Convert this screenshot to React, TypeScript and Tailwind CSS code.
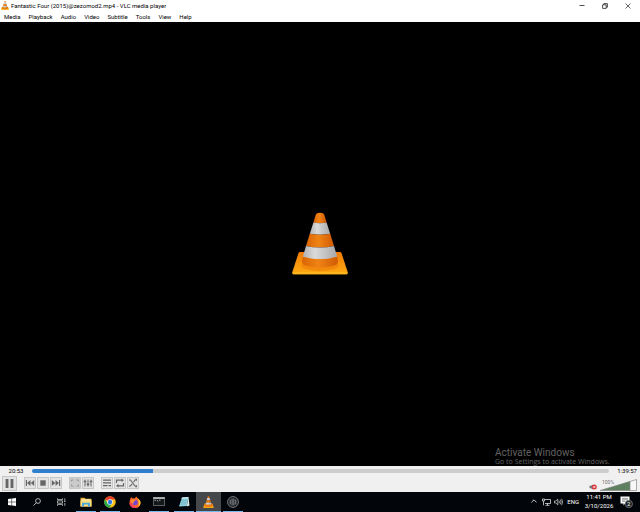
import type { ReactNode } from "react";

const MENUS = ["Media", "Playback", "Audio", "Video", "Subtitle", "Tools", "View", "Help"];

function Cone({ className }: { className: string }) {
  return (
    <svg viewBox="0 0 56 64" className={className} aria-hidden="true">
      <defs>
        <linearGradient id="base" x1="0" y1="0" x2="0" y2="1">
          <stop offset="0" stopColor="#f07c08" />
          <stop offset="1" stopColor="#ffab12" />
        </linearGradient>
        <linearGradient id="orange" x1="0" y1="0" x2="1" y2="0">
          <stop offset="0" stopColor="#d96404" />
          <stop offset="0.45" stopColor="#f08314" />
          <stop offset="1" stopColor="#d05a04" />
        </linearGradient>
        <linearGradient id="white" x1="0" y1="0" x2="1" y2="0">
          <stop offset="0" stopColor="#b0b0b0" />
          <stop offset="0.35" stopColor="#dadada" />
          <stop offset="1" stopColor="#a8a8a8" />
        </linearGradient>
      </defs>
      <path d="M8 40h40q1 0 1.500 1L55.500 59.500v2q0 .8-1 .8H1.500q-1 0-1-.8v-2L6.500 41Q7 40 8 40z" fill="url(#base)" />
      <path d="M.5 60h55v1.500q0 .8-1 .8H1.500q-1 0-1-.8z" fill="#ffb51c" />
      <path d="M10 52l36 0q2 3-3 5-15 4-30 0-5-2-3-5z" fill="#ee800c" opacity=".7" />
      <path d="M24 2q4-2.500 8 0l2.600 8.500q-6.600 1.500-13.200 0z" fill="url(#orange)" />
      <path d="M21.400 10.500q6.600 1.500 13.200 0l3.600 11.300q-10.200 2-20.400 0z" fill="url(#white)" />
      <path d="M17.800 21.800q10.200 2 20.400 0l3.800 12.300q-14 3-28 0z" fill="url(#orange)" />
      <path d="M14 34.100q14 3 28 0l3.200 10.600q-17.200 5-34.400 0z" fill="url(#white)" />
      <path d="M10.800 44.700q17.200 5 34.400 0L46 49q.3 3-3.500 4.500-14.500 4-29 0Q9.700 52 10 49z" fill="url(#orange)" />
    </svg>
  );
}

function ControlButton({ label, large, disabled, children }: { label: string; large?: boolean; disabled?: boolean; children: ReactNode }) {
  return (
    <button
      type="button"
      aria-label={label}
      className={`flex shrink-0 items-center justify-center border border-[#c6c6c6] text-[#666666] ${
        large ? "h-[15px] w-[15px]" : "h-3 w-3"
      } ${disabled ? "bg-[#cbcbcb]" : "bg-[#e3e3e3]"}`}
    >
      <svg viewBox="0 0 10 10" className={`shrink-0 ${large ? "h-[13px] w-[13px]" : "h-2.5 w-2.5"}`} fill="currentColor" stroke="none">
        {children}
      </svg>
    </button>
  );
}

function TaskItem({ label, open, active, children }: { label: string; open?: boolean; active?: boolean; children: ReactNode }) {
  return (
    <button
      type="button"
      aria-label={label}
      className={`flex h-full flex-col items-center ${active ? "bg-[#45474b]" : ""}`}
    >
      <span className="flex flex-1 items-center justify-center">{children}</span>
      <span className={`h-px ${active ? "w-full" : "w-5"} ${open ? "bg-[#76b9ed]" : ""}`} />
    </button>
  );
}

function TitleBar() {
  return (
    <header className="flex h-[11px] items-center bg-white pl-px pr-px">
      <Cone className="h-[9px] w-2" />
      <h1 className="ml-0.5 flex-1 truncate pt-px text-[6px] leading-[10px]">
        Fantastic Four (2015)@zezomod2.mp4 - VLC media player
      </h1>
      <div className="flex h-full text-[#222222]">
        <button type="button" aria-label="Minimize" className="flex w-[23px] items-center justify-center">
          <svg viewBox="0 0 6 6" className="h-1.5 w-1.5" stroke="currentColor" strokeWidth=".8"><path d="M.5 2.500h5" /></svg>
        </button>
        <button type="button" aria-label="Restore" className="flex w-[23px] items-center justify-center">
          <svg viewBox="0 0 6 6" className="h-1.5 w-1.5" fill="none" stroke="currentColor" strokeWidth=".8">
            <path d="M.6 1.800h3.600v3.600H.6zM1.800 1.800V.6h3.600v3.600H4.200" />
          </svg>
        </button>
        <button type="button" aria-label="Close" className="flex w-[23px] items-center justify-center">
          <svg viewBox="0 0 6 6" className="h-1.5 w-1.5" stroke="currentColor" strokeWidth=".7"><path d="M.5.5l5 5M5.500.5l-5 5" /></svg>
        </button>
      </div>
    </header>
  );
}

function PlayerControls() {
  return (
    <section className="bg-[#f0f0f0]">
      <div className="flex h-[10px] items-center text-[6px] leading-[10px]">
        <span className="w-8 text-center">20:53</span>
        <input
          type="range"
          aria-label="Position"
          min={0}
          max={5997}
          defaultValue={1253}
          className="h-1 min-w-0 flex-1 appearance-none rounded-sm bg-[linear-gradient(to_right,#2f7fcf_20.9%,#cdcdcd_20.9%)] [&::-webkit-slider-thumb]:h-1 [&::-webkit-slider-thumb]:w-px [&::-webkit-slider-thumb]:appearance-none"
        />
        <span className="w-[31px] pr-[3px] text-right">1:39:57</span>
      </div>
      <div className="flex h-4 items-start pl-0.5 pr-[3px]">
        <ControlButton label="Pause" large>
          <path d="M2 1.500h2.200v7H2zM5.800 1.500H8v7H5.800z" />
        </ControlButton>
        <div className="ml-[7px] mt-px flex gap-px">
          <ControlButton label="Previous">
            <path d="M.8 2h1.200v6H.8zM5.500 2v6L2 5zM9.200 2v6L5.700 5z" />
          </ControlButton>
          <ControlButton label="Stop">
            <path d="M2.300 2.300h5.400v5.400H2.300z" />
          </ControlButton>
          <ControlButton label="Next">
            <path d="M8 2h1.200v6H8zM4.500 2v6L8 5zM.8 2v6l3.500-3z" />
          </ControlButton>
        </div>
        <div className="ml-[7px] mt-px flex gap-px">
          <ControlButton label="Fullscreen" disabled>
            <path d="M1.500 3.500V2H3.500M6.500 2h2v1.500M8.500 6.500V8h-2M3.500 8h-2V6.500" fill="none" stroke="#999999" />
          </ControlButton>
          <ControlButton label="Extended settings">
            <path d="M1.500 1.500h1v7h-1zM4.500 1.500h1v7h-1zM7.500 1.500h1v7h-1zM.7 2.700h2.600v1.600H.7zM3.700 5.600h2.600v1.600H3.700zM6.700 2.700h2.600v1.600H6.700z" />
          </ControlButton>
        </div>
        <div className="ml-[7px] mt-px flex gap-px">
          <ControlButton label="Playlist">
            <path d="M1 1.500h8v1.200H1zM1 4.200h8v1.200H1zM1 7h4.500v1.200H1zM6.500 7H9v1.200H6.500z" />
          </ControlButton>
          <ControlButton label="Loop">
            <path d="M1.500 5V2.200H7M8.500 5v2.800H3" fill="none" stroke="currentColor" strokeWidth="1.200" />
            <path d="M6.500.4L9 2.200 6.500 4zM3.500 6L1 7.800l2.500 1.800z" />
          </ControlButton>
          <ControlButton label="Random">
            <path d="M1 2h1.500L7 8h1.500M1 8h1.500l1.700-2.200M5.500 4.200L7 2h1.500" fill="none" stroke="currentColor" strokeWidth="1.100" />
            <path d="M7 .8h2v2.500zM9 6.700v2.500H7z" />
          </ControlButton>
        </div>
        <button type="button" aria-label="Unmute" className="ml-auto mr-[3px] mt-2">
          <svg viewBox="0 0 8 6" className="h-1.5 w-2">
            <path d="M.5 1.800h1.500L4 .4v5.200L2 4.200H.5z" fill="#777777" />
            <circle cx="5.300" cy="3" r="2.500" fill="#d93a3f" />
            <path d="M4.300 2l2 2M6.300 2l-2 2" stroke="#ffffff" strokeWidth=".7" />
          </svg>
        </button>
        <div className="relative mt-[3px] h-3 w-[37px]">
          <svg viewBox="0 0 37 12" className="h-full w-full" aria-hidden="true">
            <path d="M0 11.500L30 2.300v9.200z" fill="#5f805f" />
            <path d="M30 2.300L36.500.5v11H30z" fill="#f7f7f7" />
            <path d="M0 11.500L36.500.5v11zM30 2.300v9.200" fill="none" stroke="#888888" strokeWidth=".7" />
          </svg>
          <span className="absolute left-0.5 top-0 text-[5px] leading-[6px] text-[#777777]">100%</span>
          <input type="range" aria-label="Volume" min={0} max={125} defaultValue={100} className="absolute inset-0 h-full w-full opacity-0" />
        </div>
      </div>
    </section>
  );
}

function Taskbar() {
  return (
    <footer className="flex h-5 items-stretch justify-between bg-[#020509] text-white">
      <nav aria-label="Taskbar" className="grid w-[245px] grid-cols-10">
        <TaskItem label="Start">
          <svg viewBox="0 0 8 8" className="h-2 w-2" fill="#ffffff">
            <path d="M0 1.100l3.600-.5v3.200H0zM4.100.5L8 0v3.800H4.100zM0 4.300h3.600v3.200L0 7zM4.100 4.300H8V8l-3.900-.5z" />
          </svg>
        </TaskItem>
        <TaskItem label="Search">
          <svg viewBox="0 0 8 8" className="h-2 w-2" fill="none" stroke="#dddddd" strokeWidth=".8">
            <circle cx="5" cy="3" r="2.400" /><path d="M3.300 4.800L.5 7.600" />
          </svg>
        </TaskItem>
        <TaskItem label="Task view">
          <svg viewBox="0 0 9 8" className="h-2 w-[9px]" fill="none" stroke="#cccccc" strokeWidth=".8">
            <path d="M.5.3v1.300h5V.3M.5 2.800h5v2.400h-5zM.5 7.800V6.400h5v1.400M7.800.3v2M7.800 5v2.800" /><path d="M7.200 3.300h1.200" strokeWidth="1.400" />
          </svg>
        </TaskItem>
        <TaskItem label="File Explorer" open>
          <svg viewBox="0 0 12 10" className="h-2.5 w-3">
            <path d="M.5.800h4l1 1h6v7.700H.5z" fill="#e9b43c" />
            <path d="M1.500 2.300h9V6h-9z" fill="#fff1bd" />
            <path d="M.5 3.300h11v6.200H.5z" fill="#fbdc7d" />
            <path d="M2 9.500V5.800h8v3.700H8V7.600H4v1.900z" fill="#47a9dd" />
          </svg>
        </TaskItem>
        <TaskItem label="Chrome" open>
          <svg viewBox="0 0 24 24" className="h-3 w-3">
            <circle cx="12" cy="12" r="11.500" fill="#fbc116" />
            <path d="M12 12L2 6.300a11.500 11.500 0 0 1 20 0V7H12z" fill="#e33b2e" />
            <path d="M2 6.300A11.500 11.500 0 0 0 11 23.500L16.500 14 12 12 7.500 15z" fill="#2da94f" />
            <circle cx="12" cy="12" r="5.600" fill="#ffffff" />
            <circle cx="12" cy="12" r="4.400" fill="#3478e5" />
          </svg>
        </TaskItem>
        <TaskItem label="Firefox">
          <svg viewBox="0 0 24 24" className="h-3 w-3">
            <path d="M3 5l1-3 3 3q2-.6 4 0l4-4q1 3 3 4 5 4 5 9a11 10.500 0 0 1-22 0q0-6 2-9z" fill="#ff6a2b" />
            <path d="M15 1q1 3 3 4 5 4 5 9a11 10.500 0 0 1-4 7.500Q21 9 15 1z" fill="#ffca32" />
            <path d="M1 13q0 6 4 9 6 4 12 0-9 1-12-6z" fill="#f0346b" />
            <circle cx="12" cy="13" r="5.500" fill="#7543d5" />
            <path d="M5 8q5-2 8 1-1 2-4 2-1 2 1 4-4 0-5-3z" fill="#ff9829" />
          </svg>
        </TaskItem>
        <TaskItem label="Command Prompt" open>
          <svg viewBox="0 0 12 9" className="h-[9px] w-3">
            <path d="M.3.300h11.400v8.400H.3z" fill="#15181a" stroke="#888888" strokeWidth=".8" />
            <path d="M.3.300h11.400v1.600H.3z" fill="#c4c4c4" />
            <path d="M1.500 3.200h1.500M4 3l1 1.500M6 3.200h1.500" stroke="#cccccc" strokeWidth=".8" />
          </svg>
        </TaskItem>
        <TaskItem label="Notepad" open>
          <svg viewBox="0 0 12 12" className="h-3 w-3">
            <path d="M4 1.500l6.500-.5-1.800 9-7.700.5z" fill="#8fd0df" />
            <path d="M4 1.500l6.500-.5-.3 1.200-6.700.5z" fill="#d9edf0" />
            <path d="M10.500 1l1 8.500-2.800 1z" fill="#dceaec" />
            <path d="M3.500 4.500l5.500-.3M3 6.300l5.500-.3M2.500 8.100L8 7.800" stroke="#559caf" strokeWidth=".5" />
          </svg>
        </TaskItem>
        <TaskItem label="VLC media player" open active>
          <Cone className="h-3 w-[11px]" />
        </TaskItem>
        <TaskItem label="Recorder" open>
          <svg viewBox="0 0 12 12" className="h-3 w-3" fill="none" stroke="#a9adb1">
            <circle cx="6" cy="6" r="5.400" fill="#14181c" strokeWidth=".7" />
            <path d="M3.200 3.500v5M5.100 2.500v7M6.900 2.500v7M8.800 3.500v5" strokeWidth=".8" />
          </svg>
        </TaskItem>
      </nav>
      <div className="flex items-center pb-0.5 pr-[7px] text-[6px]">
        <button type="button" aria-label="Show hidden icons" className="mr-[5px]">
          <svg viewBox="0 0 6 4" className="h-1 w-1.5" fill="none" stroke="#ffffff" strokeWidth=".8"><path d="M.4 3.400L3 .8l2.600 2.600" /></svg>
        </button>
        <button type="button" aria-label="Network" className="mr-[3px] mt-px">
          <svg viewBox="0 0 9 8" className="h-2 w-[9px]" fill="none" stroke="#dddddd" strokeWidth=".8">
            <path d="M3 1.500h5.500v4H3M5.500 5.500v1.800M3.500 7.300h4M.5 1h2v2h-2zM1.500 3v4.300" />
          </svg>
        </button>
        <button type="button" aria-label="Speakers" className="mr-1 mt-px">
          <svg viewBox="0 0 9 8" className="h-2 w-[9px]" fill="none" stroke="#dddddd" strokeWidth=".7">
            <path d="M.5 3h1.300l2-1.900v5.800L1.800 5H.5zM5 2.700q1 1.300 0 2.600M6.300 1.700q1.700 2.300 0 4.600M7.600.8q2 3.200 0 6.400" />
          </svg>
        </button>
        <button type="button" className="mr-1.5">ENG</button>
        <time className="mr-[7px] flex w-7 flex-col items-center whitespace-nowrap leading-[9px]">
          <span>11:41 PM</span>
          <span>3/10/2026</span>
        </time>
        <button type="button" aria-label="2 notifications" className="mt-0.5">
          <svg viewBox="0 0 13 12" className="h-3 w-[13px]">
            <path d="M.5.500h9v7H5L3.500 9.500v-2h-3z" fill="#ffffff" />
            <path d="M2 2.300h6M2 3.800h6M2 5.300h3" stroke="#26292d" strokeWidth=".5" />
            <circle cx="8.800" cy="8" r="3.700" fill="#1d2124" stroke="#999999" strokeWidth=".6" />
            <text x="8.800" y="10.300" textAnchor="middle" fontSize="6" fill="#ffffff">2</text>
          </svg>
        </button>
      </div>
    </footer>
  );
}

export default function App() {
  return (
    <div className="flex h-screen flex-col overflow-hidden bg-black font-[Roboto,'Noto_Sans',sans-serif] text-black">
      <TitleBar />
      <nav aria-label="Menu" className="flex h-[11px] items-center gap-2 bg-white pl-1 text-[6px] leading-[11px]">
        {MENUS.map((menu) => (
          <button key={menu} type="button">{menu}</button>
        ))}
      </nav>
      <main className="relative flex min-h-0 flex-1 items-center justify-center overflow-hidden bg-black">
        <Cone className="h-16 w-14" />
        {/* Activation watermark, sits right above the control bar */}
        <div className="absolute bottom-0 right-7 w-[117px] whitespace-nowrap text-[#626262]">
          <p className="text-[10px] leading-[10px]">Activate Windows</p>
          <p className="font-['Open_Sans','Noto_Sans',sans-serif] text-[7px] leading-[8px]">Go to Settings to activate Windows.</p>
        </div>
      </main>
      <PlayerControls />
      <Taskbar />
    </div>
  );
}
